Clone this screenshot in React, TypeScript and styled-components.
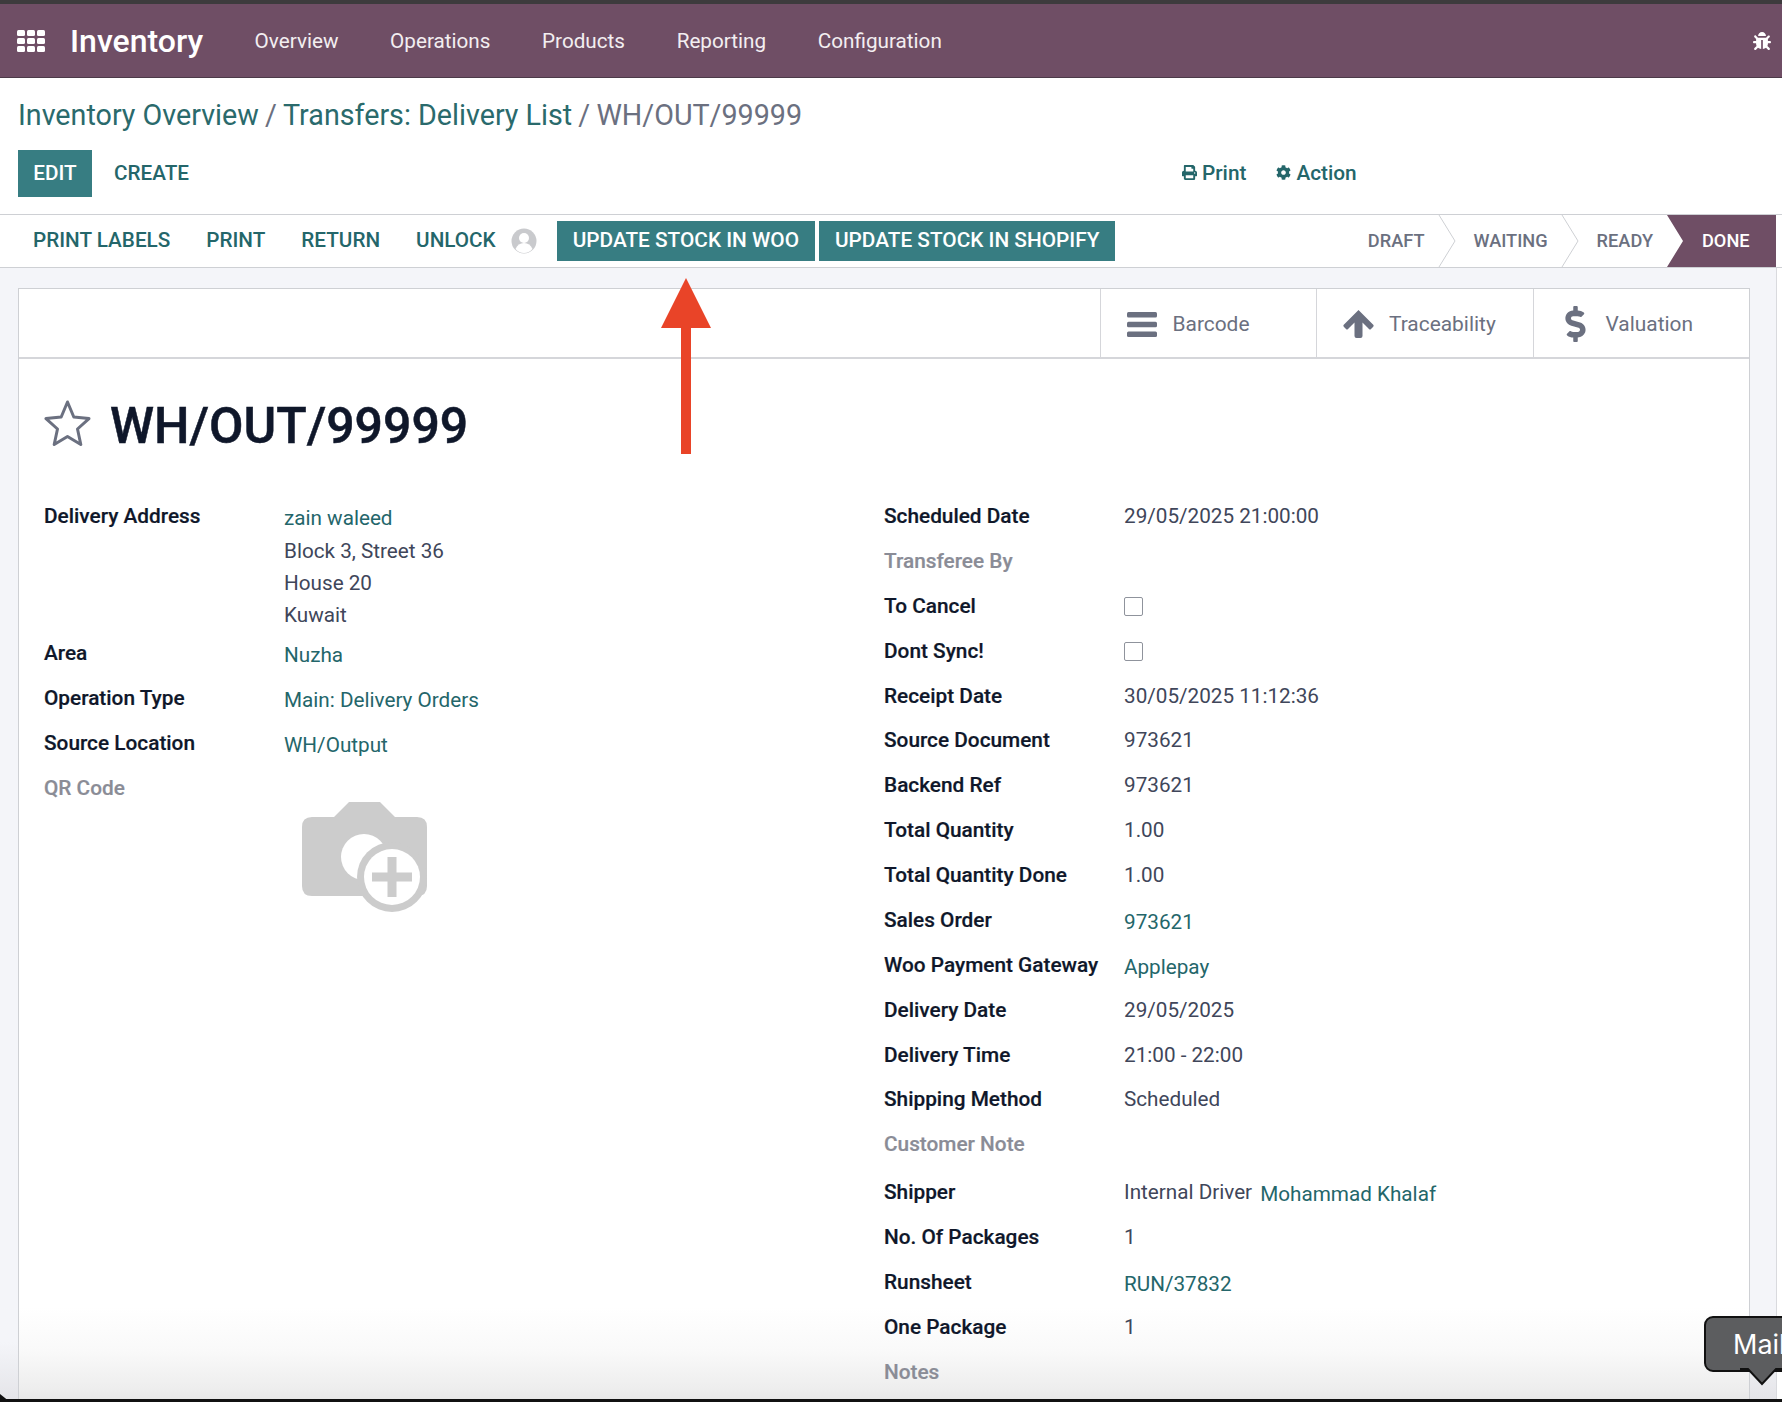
import React from 'react'
import styled, { createGlobalStyle } from 'styled-components'
import { FaBug, FaCog, FaDollarSign, FaPrint } from 'react-icons/fa'

const GlobalStyle = createGlobalStyle`
  html, body {
    margin: 0;
    padding: 0;
    background: #fff;
    font-family: Roboto, "Liberation Sans", sans-serif;
  }
`

const Shell = styled.div`
  position: relative;
  width: 1782px;
  height: 1402px;
  overflow: hidden;
  display: flex;
  flex-direction: column;
  background: #fff;
`

//Top
const Navbar = styled.header`
  height: 73px;
  flex: none;
  border-top: 4px solid #3d3b3d;
  border-bottom: 1px solid #4c3a48;
  background: #6f4e65;
  color: #fff;
  display: flex;
  align-items: center;
  padding: 0 17px;
`
const Brand = styled.div`
  font-size: 32px;
  font-weight: 500;
  margin: 0 25.6px 0 25px;
`
const MenuItem = styled.div`
  font-size: 20.7px;
  margin: 0 25.8px;
  color: #f3eef1;
`
const BugSlot = styled.div`
  margin-left: auto;
  display: flex;
  font-size: 18px;
  margin-right: -6px;
`

const ControlPanel = styled.div`
  flex: none;
  padding: 0 18px;
  height: 136px;
  display: flex;
  flex-direction: column;
`
const Breadcrumb = styled.div`
  font-size: 28.7px;
  height: 72px;
  line-height: 74px;
  color: #6b7080;
  white-space: nowrap;
`
const Crumb = styled.span`
  color: #2a6a6c;
`
const CrumbSlash = styled.span`
  margin: 0 6.2px;
`
const ButtonRow = styled.div`
  display: flex;
  align-items: center;
  height: 47px;
`
const PrimaryButton = styled.div`
  width: 74px;
  height: 47px;
  box-sizing: border-box;
  padding-bottom: 2px;
  background: #377d82;
  color: #fff;
  font-size: 20.7px;
  font-weight: 500;
  display: flex;
  align-items: center;
  justify-content: center;
`
const LinkButton = styled.div`
  color: #24666a;
  font-size: 20.7px;
  font-weight: 500;
  margin-left: 22px;
  padding-bottom: 2px;
`
const ActionButton = styled.div<{ $left: number }>`
  color: #24666a;
  font-size: 20.8px;
  font-weight: 500;
  display: flex;
  align-items: center;
  gap: 5px;
  padding-bottom: 2px;
  margin-left: ${(p) => p.$left}px;
  svg {
    font-size: 15px;
  }
`

const StatusBar = styled.div`
  flex: none;
  height: 52px;
  border-top: 1px solid #ced0d4;
  border-bottom: 1px solid #ced0d4;
  display: flex;
  align-items: center;
  padding-left: 33px;
  padding-right: 6px;
`
const StatusLink = styled.div`
  color: #24666a;
  font-size: 20.7px;
  font-weight: 500;
  margin-right: 36px;
  padding-bottom: 2px;
  white-space: nowrap;
`
const Avatar = styled.svg`
  width: 26px;
  height: 26px;
  margin: 0 20px 0 -21px;
`
const TealButton = styled.div`
  background: #377d82;
  color: #fff;
  height: 40px;
  box-sizing: border-box;
  padding: 0 16px 2px;
  margin-right: 4px;
  font-size: 20.8px;
  font-weight: 500;
  display: flex;
  align-items: center;
  white-space: nowrap;
`
const Stages = styled.div`
  margin-left: auto;
  height: 100%;
  display: flex;
  align-items: center;
`
const Stage = styled.div`
  color: #6b7080;
  font-size: 18.2px;
  font-weight: 500;
  margin: 0 13px 0 18px;
  padding-bottom: 2px;
`
const StageArrow = styled.svg`
  width: 18px;
  height: 52px;
  flex: none;
`
const ActiveStage = styled.div`
  height: 100%;
  width: 109px;
  margin-left: 1px;
  box-sizing: border-box;
  padding: 0 0 2px 35px;
  background: #6f4e65;
  color: #fff;
  font-size: 18.2px;
  font-weight: 500;
  display: flex;
  align-items: center;
  clip-path: polygon(0 0, 100% 0, 100% 100%, 0 100%, 16px 50%);
`

//Sheet
const Content = styled.main`
  flex: 1;
  min-height: 0;
  width: 1777px;
  box-sizing: border-box;
  background: linear-gradient(to bottom, #f4f5f9 calc(100% - 60px), #e4e4e8 100%);
  border-right: 1px solid #d9dade;
  padding: 20px 26px 0 18px;
`
const Sheet = styled.section`
  border: 1px solid #ced0d4;
  border-bottom: 0;
  height: 100%;
  box-sizing: border-box;
  background: linear-gradient(
    to bottom,
    #fff calc(100% - 95px),
    #f9f9f9 calc(100% - 50px),
    #eeeeee calc(100% - 15px),
    #e6e6e6 100%
  );
`
const ButtonBox = styled.div`
  height: 68px;
  border-bottom: 2px solid #d5d6da;
  display: flex;
  justify-content: flex-end;
`
const StatButton = styled.div`
  width: 216.5px;
  box-sizing: border-box;
  border-left: 1px solid #d5d6da;
  padding: 2px 0 0 26px;
  display: flex;
  align-items: center;
  color: #6b7080;
  font-size: 20.9px;
`
const StatIcon = styled.div<{ $size: number }>`
  width: 31px;
  margin-right: 15px;
  display: flex;
  justify-content: center;
  font-size: ${(p) => p.$size}px;
`
const TitleRow = styled.div`
  display: flex;
  align-items: center;
  height: 135px;
  box-sizing: border-box;
  padding: 0 0 2px 25px;
`
const StarIcon = styled.svg`
  width: 47px;
  height: 46px;
  margin-right: 19px;
  flex: none;
  position: relative;
  top: -3px;
`
const Title = styled.h1`
  margin: 0;
  font-size: 50px;
  font-weight: 500;
  color: #0f172a;
  -webkit-text-stroke: 0.5px #0f172a;
`
const FormGrid = styled.div`
  display: grid;
  grid-template-columns: 840px 1fr;
  padding-left: 25px;
`
const FieldRow = styled.div<{ $tall?: boolean }>`
  display: grid;
  grid-template-columns: 240px 1fr;
  min-height: ${(p) => (p.$tall ? 47.87 : 44.87)}px;
  ${(p) => (p.$tall ? 'padding-top: 3px;' : '')}
  box-sizing: border-box;
`
const Label = styled.div<{ $muted?: boolean }>`
  font-size: 20.8px;
  font-weight: 500;
  line-height: 44.87px;
  color: ${(p) => (p.$muted ? '#8a8c96' : '#0f172a')};
  -webkit-text-stroke: 0.2px ${(p) => (p.$muted ? '#8a8c96' : '#0f172a')};
  white-space: nowrap;
`
const Value = styled.div`
  font-size: 20.7px;
  line-height: 44.87px;
  color: #40465a;
  white-space: nowrap;
`
const Link = styled.span<{ $spaced?: boolean }>`
  color: #24666a;
  position: relative;
  top: 2px;
  margin-left: ${(p) => (p.$spaced ? 8 : 0)}px;
`
const AddressLine = styled.div`
  line-height: 32px;
  color: #40465a;
  &:first-of-type {
    margin-top: -4px;
  }
`
const Checkbox = styled.span`
  display: inline-block;
  width: 17px;
  height: 17px;
  border: 1px solid #8f939c;
  border-radius: 2px;
  vertical-align: -3px;
`
const CameraSlot = styled.div`
  padding: 36px 0 0 18px;
  svg {
    display: block;
    width: 125px;
    height: 110px;
  }
`

//Overlays
const RedArrow = styled.svg`
  position: absolute;
  left: 661px;
  top: 278px;
  width: 50px;
  height: 176px;
`
const WindowEdge = styled.div`
  position: absolute;
  left: 0;
  right: 0;
  bottom: 0;
  height: 3px;
  background: #111;
`
const CornerNick = styled.div`
  position: absolute;
  left: 0;
  bottom: 0;
  width: 10px;
  height: 8px;
  background: #111;
  clip-path: polygon(0 0, 100% 100%, 0 100%);
`
const MailBubble = styled.div`
  position: absolute;
  left: 1704px;
  top: 1316px;
  width: 110px;
  height: 56px;
  box-sizing: border-box;
  background: #5c5d5f;
  border: 2px solid #111;
  border-radius: 9px;
  color: #fff;
  font-family: Inter, sans-serif;
  font-size: 27px;
  line-height: 53px;
  padding-left: 27px;
`
const MailTail = styled.svg`
  position: absolute;
  left: 34px;
  top: 50px;
  width: 44px;
  height: 20px;
`

const menus = ['Overview', 'Operations', 'Products', 'Reporting', 'Configuration']

type Field = {
  label: string
  value?: string
  link?: string
  muted?: boolean
  check?: boolean
  tall?: boolean
}

const rightFields: Field[] = [
  { label: 'Scheduled Date', value: '29/05/2025 21:00:00' },
  { label: 'Transferee By', muted: true },
  { label: 'To Cancel', check: true },
  { label: 'Dont Sync!', check: true },
  { label: 'Receipt Date', value: '30/05/2025 11:12:36' },
  { label: 'Source Document', value: '973621' },
  { label: 'Backend Ref', value: '973621' },
  { label: 'Total Quantity', value: '1.00' },
  { label: 'Total Quantity Done', value: '1.00' },
  { label: 'Sales Order', link: '973621' },
  { label: 'Woo Payment Gateway', link: 'Applepay' },
  { label: 'Delivery Date', value: '29/05/2025' },
  { label: 'Delivery Time', value: '21:00 - 22:00' },
  { label: 'Shipping Method', value: 'Scheduled' },
  { label: 'Customer Note', muted: true },
  { label: 'Shipper', value: 'Internal Driver', link: 'Mohammad Khalaf', tall: true },
  { label: 'No. Of Packages', value: '1' },
  { label: 'Runsheet', link: 'RUN/37832' },
  { label: 'One Package', value: '1' },
  { label: 'Notes', muted: true },
]

function AppsIcon() {
  const cells = [0, 1, 2].flatMap((y) => [0, 1, 2].map((x) => [x, y]))
  return (
    <svg width="28" height="22" viewBox="0 0 28 22">
      {cells.map(([x, y]) => (
        <rect key={`${x}-${y}`} x={x * 10} y={y * 8} width="8" height="6" rx="1.5" fill="#fff" />
      ))}
    </svg>
  )
}

function CameraIcon() {
  return (
    <svg viewBox="0 0 125 110">
      <path
        d="M10 15 H32 L47 0 H78 L93 15 H115 Q125 15 125 25 V84 Q125 94 115 94 H10 Q0 94 0 84 V25 Q0 15 10 15 Z"
        fill="#cccccc"
      />
      <circle cx="62" cy="55" r="23" fill="#fff" />
      <circle cx="90" cy="75" r="35" fill="#cccccc" />
      <circle cx="90" cy="75" r="28" fill="#fff" />
      <path
        d="M85.5 55 H94.5 V70.5 H110 V79.5 H94.5 V95 H85.5 V79.5 H70 V70.5 H85.5 Z"
        fill="#cccccc"
      />
    </svg>
  )
}

function BarsIcon() {
  return (
    <svg width="30" height="25" viewBox="0 0 30 25" fill="#6b7080">
      <rect y="0" width="30" height="5.5" rx="1.5" />
      <rect y="9.7" width="30" height="5.5" rx="1.5" />
      <rect y="19.5" width="30" height="5.5" rx="1.5" />
    </svg>
  )
}

function ArrowUpIcon() {
  return (
    <svg width="31" height="28" viewBox="0 0 31 28" fill="#6b7080">
      <path d="M15.5 0 L30.5 15 Q31 16 30 17 L28 19 Q27 20 26 19 L19.5 12.5 V26 Q19.5 28 17.5 28 H13.5 Q11.5 28 11.5 26 V12.5 L5 19 Q4 20 3 19 L1 17 Q0 16 0.5 15 Z" />
    </svg>
  )
}

export default function App() {
  return (
    <Shell>
      <GlobalStyle />
      <Navbar>
        <AppsIcon />
        <Brand>Inventory</Brand>
        {menus.map((menu) => (
          <MenuItem key={menu}>{menu}</MenuItem>
        ))}
        <BugSlot>
          <FaBug />
        </BugSlot>
      </Navbar>

      <ControlPanel>
        <Breadcrumb>
          <Crumb>Inventory Overview</Crumb>
          <CrumbSlash>/</CrumbSlash>
          <Crumb>Transfers: Delivery List</Crumb>
          <CrumbSlash>/</CrumbSlash>
          WH/OUT/99999
        </Breadcrumb>
        <ButtonRow>
          <PrimaryButton>EDIT</PrimaryButton>
          <LinkButton>CREATE</LinkButton>
          <ActionButton $left={993}>
            <FaPrint />
            Print
          </ActionButton>
          <ActionButton $left={30}>
            <FaCog />
            Action
          </ActionButton>
        </ButtonRow>
      </ControlPanel>

      <StatusBar>
        <StatusLink>PRINT LABELS</StatusLink>
        <StatusLink>PRINT</StatusLink>
        <StatusLink>RETURN</StatusLink>
        <StatusLink>UNLOCK</StatusLink>
        <Avatar viewBox="0 0 26 26">
          <circle cx="13" cy="13" r="12.5" fill="#c9cacd" />
          <circle cx="13" cy="10" r="5" fill="#fff" />
          <path d="M4.5 21 Q7 15 13 15 Q19 15 21.5 21 Q18 25 13 25 Q8 25 4.5 21 Z" fill="#fff" />
        </Avatar>
        <TealButton>UPDATE STOCK IN WOO</TealButton>
        <TealButton>UPDATE STOCK IN SHOPIFY</TealButton>
        <Stages>
          <Stage>DRAFT</Stage>
          <StageArrow viewBox="0 0 18 52">
            <path d="M1 0 L17 26 L1 52" fill="none" stroke="#ced0d4" />
          </StageArrow>
          <Stage>WAITING</Stage>
          <StageArrow viewBox="0 0 18 52">
            <path d="M1 0 L17 26 L1 52" fill="none" stroke="#ced0d4" />
          </StageArrow>
          <Stage>READY</Stage>
          <ActiveStage>DONE</ActiveStage>
        </Stages>
      </StatusBar>

      <Content>
        <Sheet>
          <ButtonBox>
            <StatButton>
              <StatIcon $size={30}>
                <BarsIcon />
              </StatIcon>
              Barcode
            </StatButton>
            <StatButton>
              <StatIcon $size={30}>
                <ArrowUpIcon />
              </StatIcon>
              Traceability
            </StatButton>
            <StatButton>
              <StatIcon $size={36}>
                <FaDollarSign />
              </StatIcon>
              Valuation
            </StatButton>
          </ButtonBox>

          <TitleRow>
            <StarIcon viewBox="0 0 47 46">
              <path
                d="M23.5 2 L29.8 17 L45 18.6 L33.5 29 L36.8 44.5 L23.5 36.5 L10.2 44.5 L13.5 29 L2 18.6 L17.2 17 Z"
                fill="none"
                stroke="#6b7080"
                strokeWidth="3"
                strokeLinejoin="round"
              />
            </StarIcon>
            <Title>WH/OUT/99999</Title>
          </TitleRow>

          <FormGrid>
            <div>
              <FieldRow>
                <Label>Delivery Address</Label>
                <Value>
                  <Link>zain waleed</Link>
                  <AddressLine>Block 3, Street 36</AddressLine>
                  <AddressLine>House 20</AddressLine>
                  <AddressLine>Kuwait</AddressLine>
                </Value>
              </FieldRow>
              <FieldRow>
                <Label>Area</Label>
                <Value>
                  <Link>Nuzha</Link>
                </Value>
              </FieldRow>
              <FieldRow>
                <Label>Operation Type</Label>
                <Value>
                  <Link>Main: Delivery Orders</Link>
                </Value>
              </FieldRow>
              <FieldRow>
                <Label>Source Location</Label>
                <Value>
                  <Link>WH/Output</Link>
                </Value>
              </FieldRow>
              <FieldRow>
                <Label $muted>QR Code</Label>
                <CameraSlot>
                  <CameraIcon />
                </CameraSlot>
              </FieldRow>
            </div>
            <div>
              {rightFields.map((field) => (
                <FieldRow key={field.label} $tall={field.tall}>
                  <Label $muted={field.muted}>{field.label}</Label>
                  <Value>
                    {field.value}
                    {field.link && <Link $spaced={!!field.value}>{field.link}</Link>}
                    {field.check && <Checkbox />}
                  </Value>
                </FieldRow>
              ))}
            </div>
          </FormGrid>
        </Sheet>
      </Content>

      <RedArrow viewBox="0 0 50 176">
        <path d="M25 0 L50 50 H30 V176 H20 V50 H0 Z" fill="#e94428" />
      </RedArrow>
      <WindowEdge />
      <CornerNick />
      <MailBubble>
        Mail
        <MailTail viewBox="0 0 44 20">
          <path d="M0 1 H8 L22 16 L36 1 H44" fill="#5c5d5f" stroke="#111" strokeWidth="2" />
        </MailTail>
      </MailBubble>
    </Shell>
  )
}
